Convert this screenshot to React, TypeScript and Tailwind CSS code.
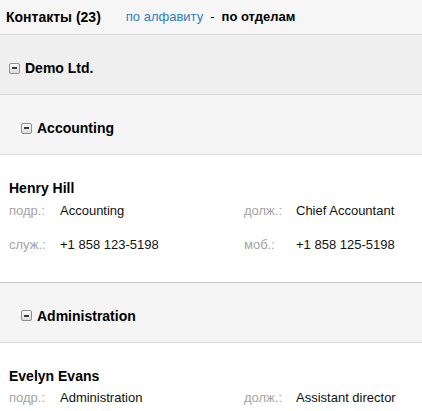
import React from "react";

type Person = {
  name: string;
  dept: string;
  post: string;
  work?: string;
  mobile?: string;
};

const font = { fontFamily: '"Liberation Sans", Arial, sans-serif' };

function MinusBox() {
  return (
    <span className="flex h-[11px] w-[11px] shrink-0 items-center justify-center rounded-[2px] border border-[#8f8f8f] bg-gradient-to-b from-[#fafafa] to-[#dedede]">
      <span className="h-[2px] w-[5px] bg-[#3a3a3a]" />
    </span>
  );
}

function GroupHeader({ title, level, tone }: { title: string; level: number; tone: string }) {
  return (
    <div className={`h-[60px] border-b border-[#dadada] pt-[23px] ${tone}`}>
      <div className={`flex h-[20px] items-center gap-[5px] ${level === 0 ? "pl-[9px]" : "pl-[21px]"}`}>
        <MinusBox />
        <span className="text-[14px] leading-[20px] font-bold text-black">{title}</span>
      </div>
    </div>
  );
}

function Field({ label, value }: { label: string; value?: string }) {
  return (
    <>
      <span className="text-[#a3a3a3]">{label}</span>
      <span className="text-[#111]">{value}</span>
    </>
  );
}

function PersonCard({ p }: { p: Person }) {
  return (
    <div className="border-b border-[#c8c8c8] bg-white pt-[23px] pb-[28px] pl-[9px]">
      <div className="text-[14px] leading-[20px] font-bold text-black">{p.name}</div>
      <div className="mt-[3.5px] grid grid-cols-[51px_184px_52px_1fr] gap-y-[16px] text-[13px] leading-[18px]">
        <Field label="подр.:" value={p.dept} />
        <Field label="долж.:" value={p.post} />
        {p.work && (
          <>
            <Field label="служ.:" value={p.work} />
            <Field label="моб.:" value={p.mobile} />
          </>
        )}
      </div>
    </div>
  );
}

export default function App() {
  const henry: Person = {
    name: "Henry Hill",
    dept: "Accounting",
    post: "Chief Accountant",
    work: "+1 858 123-5198",
    mobile: "+1 858 125-5198",
  };
  const evelyn: Person = {
    name: "Evelyn Evans",
    dept: "Administration",
    post: "Assistant director",
  };

  return (
    <div className="h-[411px] w-[422px] overflow-hidden bg-white" style={font}>
      {/* Top bar */}
      <div className="flex h-[35px] items-center border-b border-[#dadada] bg-[#f6f6f6] pl-[6px]">
        <span className="text-[14px] leading-[20px] font-bold text-black">Контакты (23)</span>
        <span className="ml-[25px] text-[13px] text-[#2f7fc0]">по алфавиту</span>
        <span className="mx-[7px] text-[13px] text-black">-</span>
        <span className="text-[13px] font-bold text-black">по отделам</span>
      </div>

      <GroupHeader title="Demo Ltd." level={0} tone="bg-[#efefef]" />
      <GroupHeader title="Accounting" level={1} tone="bg-[#f5f5f5]" />
      <PersonCard p={henry} />
      <GroupHeader title="Administration" level={1} tone="bg-[#f5f5f5]" />
      <PersonCard p={evelyn} />
    </div>
  );
}
